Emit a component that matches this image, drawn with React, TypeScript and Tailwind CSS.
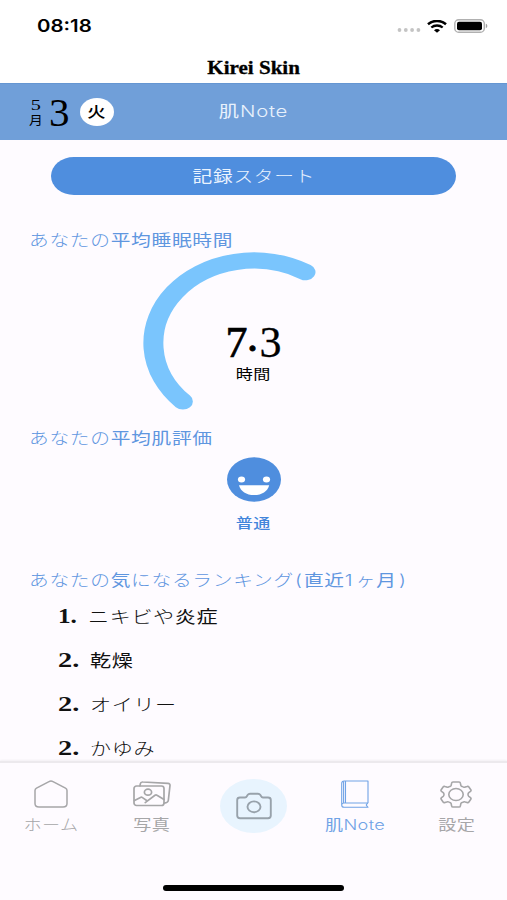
import React from "react";

const SANS = "font-['Inter','Noto_Sans_CJK_JP',sans-serif]";
const SERIF = "font-['Liberation_Serif','Noto_Sans_CJK_JP',serif]";

const ranking = [
  { rank: 1, label: "ニキビや炎症" },
  { rank: 2, label: "乾燥" },
  { rank: 2, label: "オイリー" },
  { rank: 2, label: "かゆみ" }
];

// kanji are set heavier than the kana around them
const Mixed = ({ text }: { text: string }) => (
  <>
    {text.split(/([一-龠]+)/).map((part, i) => (
      <span key={i} className={i % 2 ? "font-normal" : "font-light"}>
        {part}
      </span>
    ))}
  </>
);

const StatusBar = () => (
  <div className="flex h-[52px] items-center justify-between pl-[37px] pr-[19px] text-black">
    <span className="origin-left scale-x-[1.2] pt-px text-[17px] font-semibold leading-none">08:18</span>
    <div className="flex items-center">
      <svg width="24" height="14" viewBox="0 0 24 14" className="mr-[6px]" fill="#c4c4c4">
        <circle cx="2.5" cy="11" r="1.9" />
        <circle cx="8.8" cy="11" r="1.9" />
        <circle cx="15.1" cy="11" r="1.9" />
        <circle cx="21.4" cy="11" r="1.9" />
      </svg>
      <svg width="20" height="13" viewBox="0 0 20 13" className="mr-[7px]" fill="none" stroke="black">
        <path d="M1 4.3C6 -.2 14 -.2 19 4.3" strokeWidth="2.5" />
        <path d="M4.3 7.5C7.4 4.8 12.6 4.8 15.7 7.5" strokeWidth="2.3" />
        <path d="M7 10.3C8.7 8.7 11.3 8.7 13 10.3L10 12.8Z" fill="black" stroke="none" />
      </svg>
      <svg width="34" height="14" viewBox="0 0 34 14">
        <rect x="0.8" y="0.8" width="29.5" height="12.4" rx="3.8" fill="white" stroke="#b0b0b0" strokeWidth="1.4" />
        <rect x="3" y="2.7" width="25" height="8.6" rx="2" fill="black" />
        <path d="M31.8 4.8v4.4c2-.6 2-3.8 0-4.4Z" fill="#a0a0a0" />
      </svg>
    </div>
  </div>
);

const SectionTitle = ({ children }: { children: React.ReactNode }) => (
  <h2 className="-ml-px w-max origin-left scale-x-[1.23] whitespace-nowrap text-[16px] leading-6 tracking-[0.6px] text-[#5f96df]">
    {children}
  </h2>
);

const HomeIcon = () => (
  <svg width="34" height="28" viewBox="0 0 34 28" fill="none" stroke="currentColor" strokeWidth="1.5" strokeLinejoin="round">
    <path d="M1 10.5Q1 9 2.5 8.2L15 1.6Q17 .5 19 1.6L31.5 8.2Q33 9 33 10.5V23.5Q33 27 29 27H5Q1 27 1 23.5Z" />
  </svg>
);

const PhotosIcon = () => (
  <svg width="38" height="28" viewBox="0 0 38 28" fill="none" stroke="currentColor" strokeWidth="1.7" strokeLinejoin="round" strokeLinecap="round">
    <rect x="1" y="6" width="30" height="19.5" rx="2.5" />
    <path d="M7 5.8L7.3 3.8Q7.6 1.8 10 2L35 3.3Q37.2 3.5 37 5.5L35.3 20.5Q35 22.8 31.3 23.2" />
    <ellipse cx="15" cy="12.2" rx="3.6" ry="3" />
    <path d="M1.5 20.5L7.5 17.4Q8.5 16.9 9.5 17.6L14 20.8M12.2 22.6L22 15.3Q23 14.6 24 15.3L31 19.5" />
  </svg>
);

const CameraIcon = () => (
  <svg width="36" height="28" viewBox="0 0 36 28" fill="none" stroke="currentColor" strokeWidth="1.9" strokeLinejoin="round">
    <path d="M4 5.5H9Q10.3 5.5 11 4L11.8 2.8Q12.5 1.7 14 1.7H22Q23.5 1.7 24.2 2.8L25 4Q25.7 5.5 27 5.5H32Q34.8 5.5 34.8 8V23.5Q34.8 26.2 32 26.2H4Q1.2 26.2 1.2 23.5V8Q1.2 5.5 4 5.5Z" />
    <ellipse cx="18" cy="14.8" rx="6.5" ry="5.4" />
  </svg>
);

const BookIcon = () => (
  <svg width="28" height="28" viewBox="0 0 28 28" fill="none" stroke="currentColor" strokeWidth="1.1" strokeLinejoin="round">
    <path d="M27 23V1H3.2Q.7 1 .7 3.5V25Q.7 27.3 3.2 27.3H27L25.2 25L26.8 23H3.2Q.7 23 .7 25" />
    <path d="M4.5 1V23M2.6 1.2V23" />
  </svg>
);

const GearIcon = () => (
  <svg width="32" height="27" viewBox="0 0 32 27" fill="none" stroke="currentColor" strokeWidth="1.6" strokeLinejoin="round">
    <path d="M13 1H19Q20.2 1 20.4 2.2L20.8 4.2Q21 5 22 5.4L23.5 6.1Q24.4 6.5 25.3 6.1L27 5.5Q28.2 5 28.9 6L30.8 8.7Q31.4 9.7 30.5 10.4L28.8 11.7Q28 12.4 28 13.5Q28 14.6 28.8 15.3L30.5 16.6Q31.4 17.3 30.8 18.3L28.9 21Q28.2 22 27 21.5L25.3 20.9Q24.4 20.5 23.5 20.9L22 21.6Q21 22 20.8 22.8L20.4 24.8Q20.2 26 19 26H13Q11.8 26 11.6 24.8L11.2 22.8Q11 22 10 21.6L8.5 20.9Q7.6 20.5 6.7 20.9L5 21.5Q3.8 22 3.1 21L1.2 18.3Q.6 17.3 1.5 16.6L3.2 15.3Q4 14.6 4 13.5Q4 12.4 3.2 11.7L1.5 10.4Q.6 9.7 1.2 8.7L3.1 6Q3.8 5 5 5.5L6.7 6.1Q7.6 6.5 8.5 6.1L10 5.4Q11 5 11.2 4.2L11.6 2.2Q11.8 1 13 1Z" />
    <ellipse cx="16" cy="13.5" rx="7.2" ry="6" />
  </svg>
);

interface TabProps {
  icon: React.ReactNode;
  label: string;
  active?: boolean;
}

const Tab = ({ icon, label, active }: TabProps) => (
  <button
    type="button"
    className={`flex flex-1 flex-col items-center pt-[17px] ${active ? "text-[#70a3e6]" : "text-[#a6a6a8]"}`}
  >
    <span className="flex h-7 items-center">{icon}</span>
    <span className="mt-[7px] scale-x-[1.25] whitespace-nowrap text-[14.5px] leading-5 tracking-[0.3px]">
      <Mixed text={label} />
    </span>
  </button>
);

export default function App() {
  return (
    <div className={`flex h-[900px] w-[507px] flex-col overflow-hidden bg-[#fefbff] ${SANS}`}>
      <div className="h-[83px] shrink-0 bg-white">
        <StatusBar />
        <h1 className={`flex h-[31px] items-center justify-center text-black ${SERIF}`}>
          <span className="scale-x-[1.17] text-[18px] font-bold leading-none [-webkit-text-stroke:0.3px_black]">
            Kirei Skin
          </span>
        </h1>
      </div>

      <header className="grid h-[57px] shrink-0 grid-cols-3 items-center border-t border-[#6596d2] bg-[#709fd9]">
        <div className="flex items-center pl-[29px] text-black">
          <div className="flex w-[14px] flex-col items-center pt-px">
            <span className={`h-[13px] scale-x-[1.35] text-[15px] leading-[13px] ${SERIF}`}>5</span>
            <span className="mt-[2px] h-[13px] scale-x-[1.15] text-[12px] leading-[13px]">月</span>
          </div>
          <span className={`ml-[6px] w-[20px] text-center text-[41px] leading-[50px] ${SERIF}`}>3</span>
          <span className="ml-[11px] flex h-[28px] w-[34px] items-center justify-center rounded-[50%] bg-white text-[15px] font-medium">
            <span className="scale-x-[1.22]">火</span>
          </span>
        </div>
        <span className="scale-x-[1.27] pb-[2px] text-center text-[16px] tracking-[0.6px] text-[#e8f1fc]">
          <Mixed text="肌Note" />
        </span>
      </header>

      <main className="min-h-0 flex-1 overflow-hidden px-[30px]">
        <button
          type="button"
          className="mx-auto mt-[17px] flex h-[38px] w-[405px] items-center justify-center rounded-[23px/19px] bg-[#4f8ede] pb-px text-[#eaf3ff]"
        >
          <span className="scale-x-[1.23] text-[16px] tracking-[0.6px]">
            <Mixed text="記録スタート" />
          </span>
        </button>

        <section className="mt-[33px]">
          <SectionTitle>
            <Mixed text="あなたの平均睡眠時間" />
          </SectionTitle>
          <div className="grid h-[160px] justify-items-center">
            <svg width="224" height="160" viewBox="0 0 224 160" className="col-start-1 row-start-1 overflow-visible">
              <g transform="translate(112 91) scale(1.22 1)">
                <path d="M-58.3 58.4A82.52 82.52 0 0 1 42.2 -70.9" fill="none" stroke="#7ac5fd" strokeWidth="16.4" strokeLinecap="round" />
              </g>
            </svg>
            <div className="col-start-1 row-start-1 flex flex-col items-center pt-[68px] text-black">
              <div className={`flex items-baseline text-[44px] leading-[46px] ${SERIF}`}>
                <span className="[-webkit-text-stroke:0.7px_black]">7</span>
                <span className="w-[12px] -translate-x-px -translate-y-[6px] text-center [-webkit-text-stroke:1px_black]">.</span>
                <span className="[-webkit-text-stroke:0.3px_black]">3</span>
              </div>
              <span className="-mt-[2px] scale-x-[1.22] text-[14px] leading-5 tracking-[0.3px]">時間</span>
            </div>
          </div>
        </section>

        <section className="mt-[14px]">
          <SectionTitle>
            <Mixed text="あなたの平均肌評価" />
          </SectionTitle>
          <div className="mt-[7px] flex flex-col items-center text-[#4285db]">
            <svg width="54" height="45" viewBox="0 0 54 45">
              <ellipse cx="27" cy="22.5" rx="27" ry="22.3" fill="#4f8ede" />
              <ellipse cx="14.5" cy="22.5" rx="3.6" ry="3" fill="white" />
              <ellipse cx="39.5" cy="22.5" rx="3.6" ry="3" fill="white" />
              <path d="M12 28.2H42.2C40.5 34.5 35 38 27.1 38S13.7 34.5 12 28.2Z" fill="white" />
            </svg>
            <span className="mt-[11px] scale-x-[1.22] text-[14px] font-medium leading-5 tracking-[0.3px]">普通</span>
          </div>
        </section>

        <section className="mt-[35px]">
          <SectionTitle>
            <Mixed text="あなたの気になるランキング" />
            <span className="mx-px font-light">(</span>
            <Mixed text="直近" />
            <span className="mr-[2px] font-light">1</span>
            <Mixed text="ヶ月" />
            <span className="ml-[2px] font-light">)</span>
          </SectionTitle>
          <ol className="mt-[2px]">
            {ranking.map((item) => (
              <li key={item.label} className="flex h-[44px] items-center pl-[28px] text-[#111]">
                <span
                  className={`origin-left text-[21px] font-bold leading-none ${SERIF} ${
                    item.rank === 1 ? "w-[30px] scale-x-[1.2]" : "w-[32px] scale-x-[1.35]"
                  }`}
                >
                  {item.rank}.
                </span>
                <span className="origin-left scale-x-[1.24] pt-px text-[17px] leading-6 tracking-[0.5px]">
                  <Mixed text={item.label} />
                </span>
              </li>
            ))}
          </ol>
        </section>
      </main>

      <nav className="relative flex h-[139px] shrink-0 flex-col border-t-2 border-[#ece9ed] bg-[#fefbff] shadow-[0_-1px_2px_rgba(0,0,0,0.05)]">
        <div className="flex flex-1">
          <Tab icon={<HomeIcon />} label="ホーム" />
          <Tab icon={<PhotosIcon />} label="写真" />
          <button type="button" className="flex flex-1 justify-center pt-[16px] text-[#98a2ab]">
            <span className="flex h-[54px] w-[67px] items-center justify-center rounded-[50%] bg-[#e8f4fe]">
              <CameraIcon />
            </span>
          </button>
          <Tab icon={<BookIcon />} label="肌Note" active />
          <Tab icon={<GearIcon />} label="設定" />
        </div>
        <div className="mx-auto mb-[9px] h-[6px] w-[181px] rounded-full bg-black" />
      </nav>
    </div>
  );
}
